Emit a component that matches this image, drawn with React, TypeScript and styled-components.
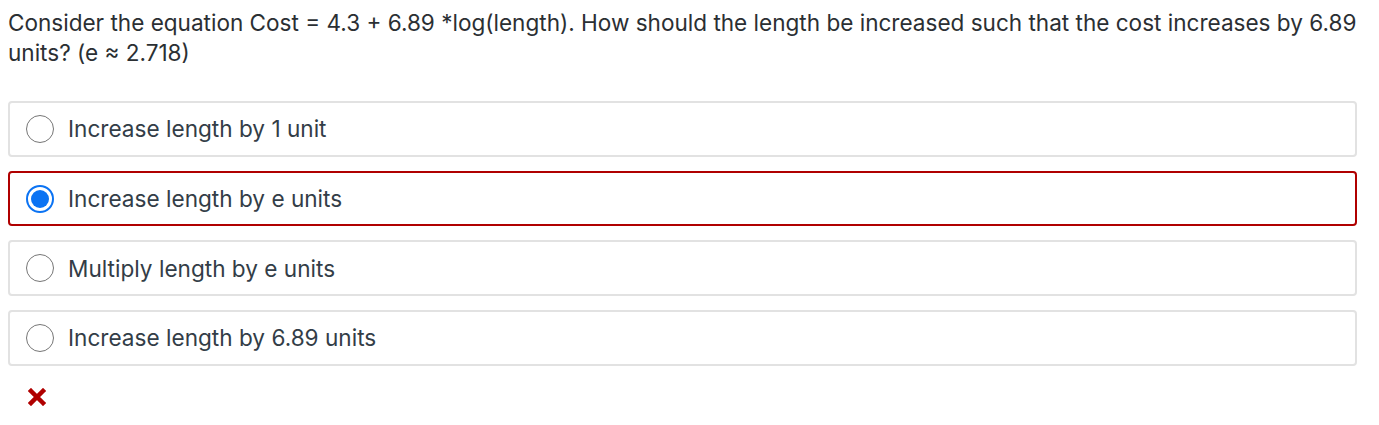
import styled, { createGlobalStyle } from 'styled-components'

const GlobalStyle = createGlobalStyle`
  body {
    margin: 8px;
    background: #ffffff;
    font-family: Inter, 'Noto Sans', Arial, sans-serif;
  }
`

const options = [
  'Increase length by 1 unit',
  'Increase length by e units',
  'Multiply length by e units',
  'Increase length by 6.89 units',
]

const selected = 1

const Radio = ({ checked }: { checked: boolean }) => (
  <StyledRadio checked={checked}>{checked && <StyledDot />}</StyledRadio>
)

const App = () => {
  return (
    <StyledWrapper>
      <GlobalStyle />
      <StyledQuestion>
        Consider the equation Cost = 4.3 + 6.89 *log(length). How should the length be increased such that
        the cost increases by 6.89 units? (e ≈ 2.718)
      </StyledQuestion>
      <StyledOptionList>
        {options.map((text, i) => (
          <StyledOption key={text} wrong={i === selected}>
            <Radio checked={i === selected} />
            <span>{text}</span>
          </StyledOption>
        ))}
      </StyledOptionList>
      <StyledMark>
        <svg width='18' height='18' viewBox='0 0 18 18'>
          <path d='M3 3 L15 15 M15 3 L3 15' stroke='#b00000' strokeWidth='4.5' strokeLinecap='square' />
        </svg>
      </StyledMark>
    </StyledWrapper>
  )
}

export default App

const StyledWrapper = styled.div`
  width: 1349px;
`

const StyledQuestion = styled.p`
  margin: 0;
  font-size: 22.55px;
  line-height: 30px;
  color: #2b2f33;
`

const StyledOptionList = styled.div`
  margin-top: 33px;
  display: flex;
  flex-direction: column;
  gap: 14px;
`

const StyledOption = styled.label<{ wrong?: boolean }>`
  display: flex;
  align-items: center;
  gap: 14px;
  height: 55.7px;
  box-sizing: border-box;
  padding: 0 16px;
  border: 2px solid ${({ wrong }) => (wrong ? '#b00000' : '#e2e2e2')};
  border-radius: 4px;
  font-size: 22.6px;
  color: #333d47;
`

const StyledRadio = styled.span<{ checked?: boolean }>`
  width: 28px;
  height: 28px;
  box-sizing: border-box;
  border-radius: 50%;
  border: ${({ checked }) => (checked ? '2px solid #0b73f3' : '1.5px solid #767676')};
  display: flex;
  align-items: center;
  justify-content: center;
  flex-shrink: 0;
`

const StyledDot = styled.span`
  width: 18px;
  height: 18px;
  border-radius: 50%;
  background: #0b73f3;
`

const StyledMark = styled.div`
  margin-top: 22px;
  padding-left: 20px;
  height: 18px;
`
